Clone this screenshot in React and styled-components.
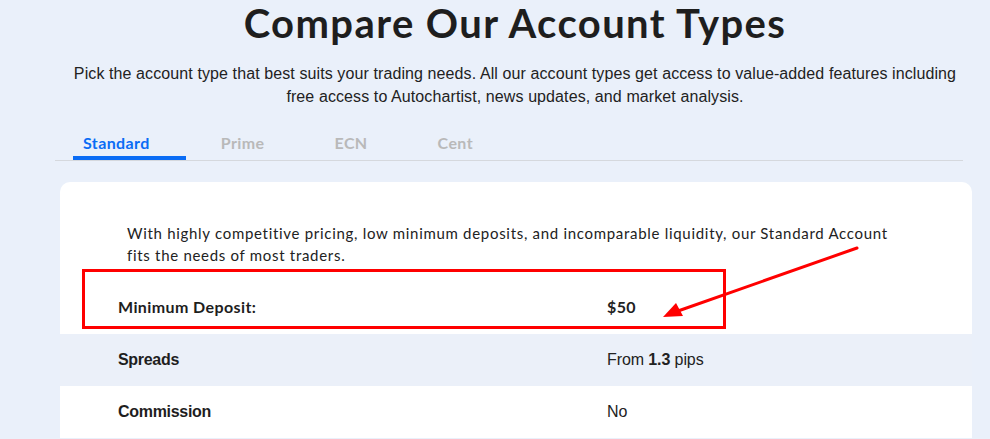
import * as React from 'react';
import styled, { createGlobalStyle } from 'styled-components';

const GlobalStyle = createGlobalStyle`
    html, body {
        margin: 0;
        padding: 0;
        background: #eaf0fa;
        font-family: 'Lato', 'Liberation Sans', sans-serif;
        color: #1e1e1e;
        overflow: hidden;
    }
`;

const condensed = `'Liberation Sans', Arial, sans-serif`;

export default class App extends React.Component {
    render() {
        const tabs = ['Standard', 'Prime', 'ECN', 'Cent'];
        const rows = [
            { label: 'Minimum Deposit:', value: <b>$50</b>, wide: true },
            { label: 'Spreads', value: <span>From <b>1.3</b> pips</span>, shaded: true },
            { label: 'Commission', value: 'No' }
        ];
        return (
            <Page>
                <GlobalStyle />
                <Title>Compare Our Account Types</Title>
                <Subtitle>
                    Pick the account type that best suits your trading needs. All our account types get access to value-added features including
                    <br />
                    free access to Autochartist, news updates, and market analysis.
                </Subtitle>
                <TabBar>
                    {tabs.map((t, i) => <Tab key={t} active={i === 0}>{t}</Tab>)}
                </TabBar>
                <Card>
                    <Intro>
                        With highly competitive pricing, low minimum deposits, and incomparable liquidity, our Standard Account
                        <br />
                        fits the needs of most traders.
                    </Intro>
                    {rows.map(r => (
                        <Row key={r.label} shaded={r.shaded} wide={r.wide}>
                            <Label wide={r.wide}>{r.label}</Label>
                            <Value wide={r.wide}>{r.value}</Value>
                        </Row>
                    ))}
                </Card>
                <Annotation width="990" height="439" viewBox="0 0 990 439">
                    <rect x="83.5" y="270.5" width="641" height="57" fill="none" stroke="#ff0000" strokeWidth="3" />
                    <line x1="857" y1="248" x2="678" y2="311" stroke="#ff0000" strokeWidth="3" strokeLinecap="round" />
                    <polygon points="663,317 676,303 683,316" fill="#ff0000" />
                </Annotation>
            </Page>
        );
    }
}

const Page = styled.div`
    position: relative;
    width: 920px;
    margin-left: 55px;
    height: 439px;
`;

const Title = styled.h1`
    margin: 0;
    text-align: center;
    font-family: 'Lato', sans-serif;
    font-weight: 700;
    font-size: 40px;
    letter-spacing: 1.4px;
    line-height: 47px;
    color: #1e1e1e;
`;

const Subtitle = styled.p`
    margin: 15px 0 0;
    text-align: center;
    font-family: ${condensed};
    font-size: 16px;
    letter-spacing: 0.1px;
    line-height: 23px;
    color: #222;
`;

const TabBar = styled.div`
    display: flex;
    margin: 25px 12px 0 0;
    padding-left: 18px;
    border-bottom: 1px solid #d5d8dd;
`;

const Tab = styled.div`
    padding: 0 35px 3px;
    font-family: 'Lato', sans-serif;
    font-weight: 700;
    font-size: 16px;
    letter-spacing: 0.4px;
    line-height: 20px;
    color: ${p => (p.active ? '#0a6cf5' : '#b9b9b9')};
    border-bottom: 4px solid ${p => (p.active ? '#0a6cf5' : 'transparent')};
    &:first-child {
        padding-left: 10px;
        padding-right: 36px;
    }
`;

const Card = styled.div`
    margin: 21px 3px 0 5px;
    padding-top: 40px;
    background: #fff;
    border-radius: 10px 10px 0 0;
`;

const Intro = styled.p`
    margin: 0 0 16px;
    padding: 0 20px 0 67px;
    font-family: 'Lato', sans-serif;
    font-size: 15px;
    letter-spacing: 0.7px;
    line-height: 22px;
    color: #222;
`;

const Row = styled.div`
    display: grid;
    grid-template-columns: 489px 1fr;
    align-items: center;
    height: 52px;
    box-sizing: border-box;
    padding: 0 0 ${p => (p.wide ? '4px' : '0')} 58px;
    background: ${p => (p.shaded ? '#ebf0f9' : '#fff')};
`;

const Label = styled.div`
    font-family: ${p => (p.wide ? "'Lato', sans-serif" : condensed)};
    font-weight: 700;
    font-size: 16px;
    letter-spacing: ${p => (p.wide ? '0.4px' : '-0.3px')};
    color: #1e1e1e;
`;

const Value = styled.div`
    font-family: ${p => (p.wide ? "'Lato', sans-serif" : condensed)};
    font-size: 16px;
    letter-spacing: ${p => (p.wide ? '0.4px' : '-0.1px')};
    color: #222;
    b {
        font-weight: 700;
    }
`;

const Annotation = styled.svg`
    position: absolute;
    left: -55px;
    top: 0;
    pointer-events: none;
`;
